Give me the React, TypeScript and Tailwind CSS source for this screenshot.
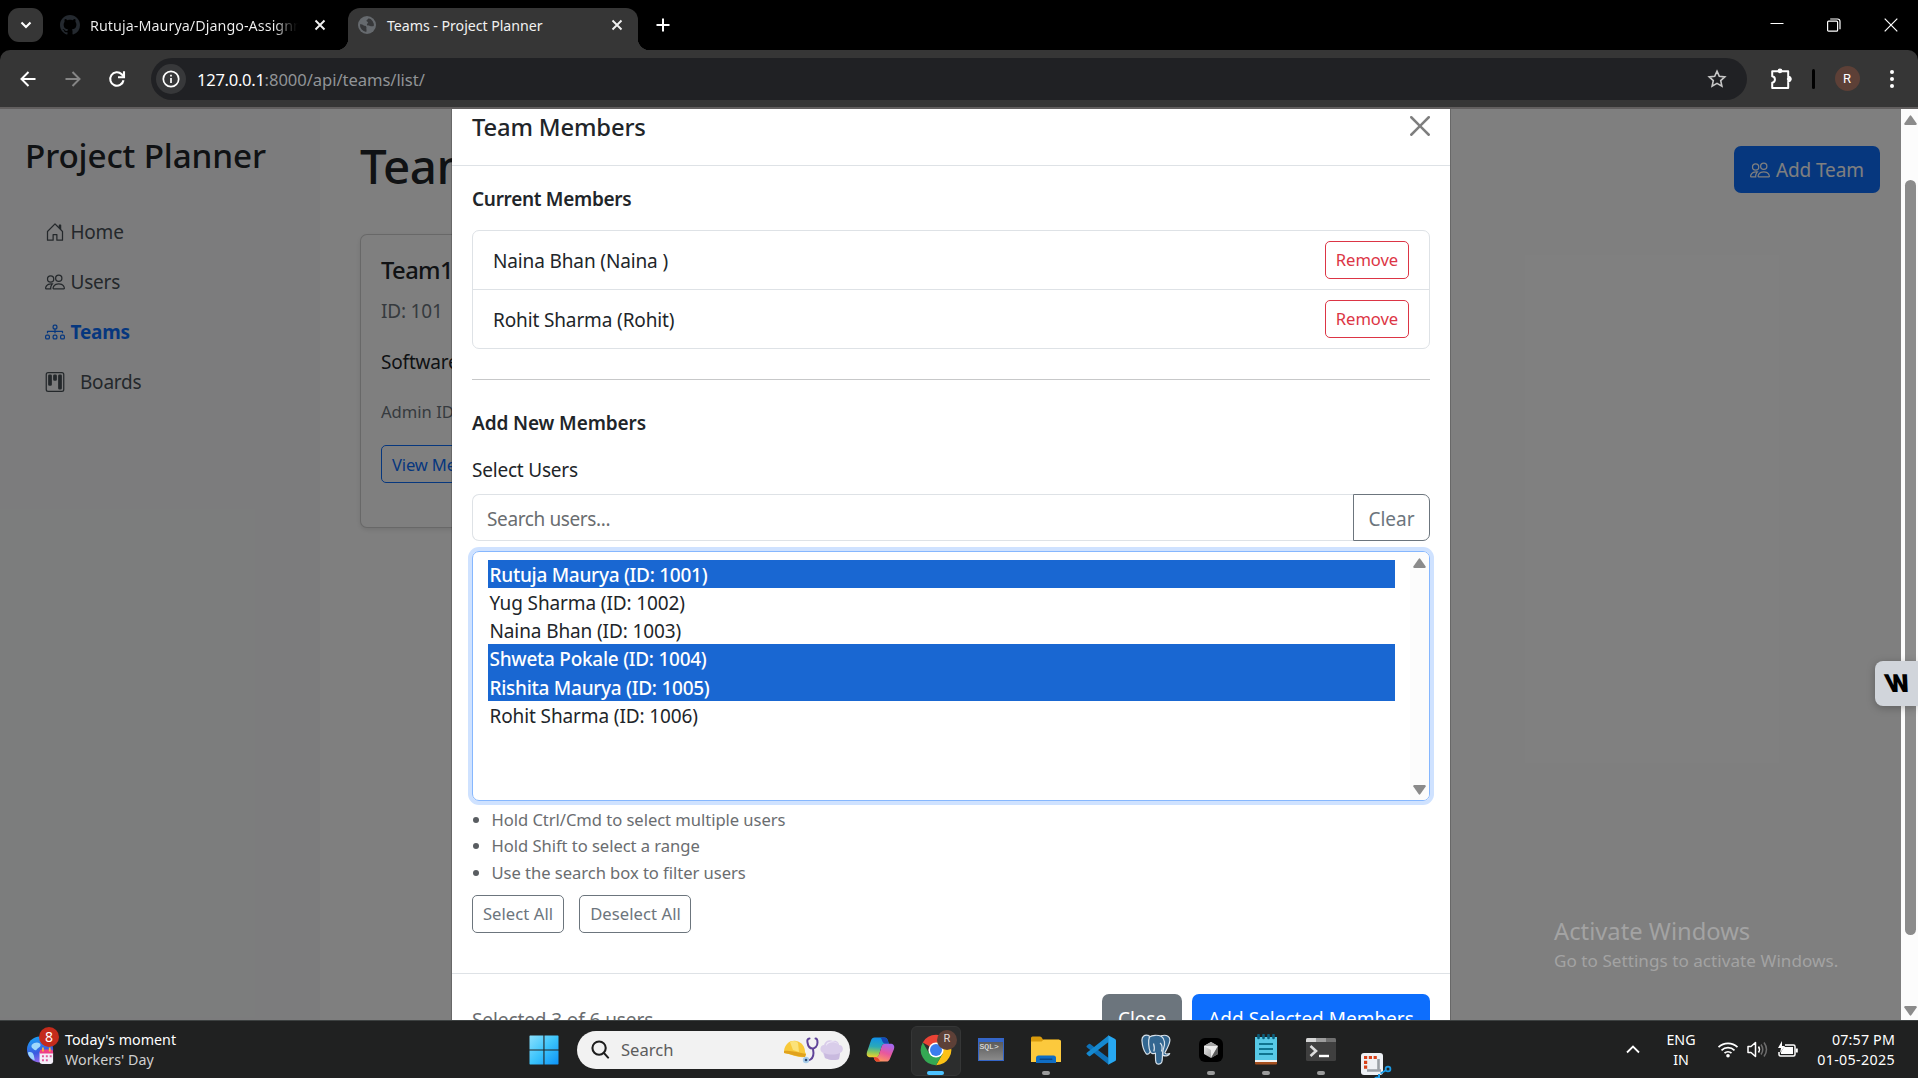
import type { ReactNode } from "react";
import { BsDiagram3, BsGithub, BsHouseDoor, BsKanban, BsPeople } from "react-icons/bs";

/* ---------- Browser chrome ---------- */

function TabClose() {
  return (
    <svg width="12" height="12" viewBox="0 0 12 12" stroke="#f1f1f1" strokeWidth="1.9" fill="none">
      <path d="M1.5 1.5l9 9M10.5 1.5l-9 9" />
    </svg>
  );
}

function GlobeFavicon() {
  return (
    <svg width="18" height="18" viewBox="0 0 18 18">
      <circle cx="9" cy="9" r="9" fill="#666a6e" />
      <path
        d="M2 8.2c1.500 0 2.600.3 3.400 1.100.700.700 2.400.400 2.900 1.400.500 1.200-.300 1.900.200 2.900.200.700 0 1.600-.300 2.400A7.100 7.100 0 0 1 2 8.200zM10.600 2.200c-.300 1.300-1.900 1.300-2.100 2.300-.200 1.100 1.500 1 1.500 2.100s-1.600 1.200-1 2.300c.700 1 2.200.200 3.100 1 .8.700 2.400.400 3.700.200a7.200 7.200 0 0 0-5.200-7.900z"
        fill="#37383a"
      />
    </svg>
  );
}

function TabStrip() {
  return (
    <div className="flex h-[50px] shrink-0 bg-black">
      <div className="mt-2 ml-2 flex h-[34px] w-[35px] items-center justify-center rounded-[11px] bg-[#363636]">
        <svg width="12" height="8" viewBox="0 0 12 8" fill="none" stroke="#fff" strokeWidth="2.1">
          <path d="M1.500 1.500L6 6l4.500-4.500" />
        </svg>
      </div>
      <div className="flex h-[50px] w-[305px] items-center pl-[17px]">
        <BsGithub className="size-5 shrink-0 text-[#24292f]" />
        <span className="ml-[10px] w-[210px] overflow-hidden whitespace-nowrap bg-linear-to-r from-[#f1f1f1] from-88% to-black to-100% bg-clip-text pt-[2px] text-[14.300px] leading-5 tracking-[0.004em] text-transparent">
          Rutuja-Maurya/Django-Assignment
        </span>
        <span className="ml-[14px]">
          <TabClose />
        </span>
      </div>
      <div className="relative mt-2 flex h-[42px] w-[290px] items-center rounded-t-[12px] bg-[#363636] pb-2 pl-[10px]">
        <div className="absolute bottom-0 -left-3 size-3 bg-[radial-gradient(circle_at_0_0,transparent_12px,#363636_12.500px)]" />
        <div className="absolute -right-3 bottom-0 size-3 bg-[radial-gradient(circle_at_100%_0,transparent_12px,#363636_12.500px)]" />
        <GlobeFavicon />
        <span className="ml-[11px] w-[160px] pt-[2px] text-[14.200px] leading-5 tracking-[-0.003em] whitespace-nowrap text-[#f1f1f1]">
          Teams - Project Planner
        </span>
        <span className="ml-[64px]">
          <TabClose />
        </span>
      </div>
      <div className="mt-[18px] ml-[18px]">
        <svg width="14" height="14" viewBox="0 0 14 14" stroke="#fff" strokeWidth="2">
          <path d="M7 0.500v13M0.500 7h13" />
        </svg>
      </div>
      <div className="mt-[18px] mr-5 ml-auto flex items-center gap-[43px] self-start">
        <svg width="14" height="14" viewBox="0 0 14 14" stroke="#fff">
          <path d="M0.500 5.500h13" />
        </svg>
        <svg width="14" height="14" viewBox="0 0 14 14" stroke="#fff" strokeWidth="1.200" fill="none">
          <rect x="0.600" y="3.200" width="10" height="10" rx="1" />
          <path d="M3.200 1h7.300q2.500 0 2.500 2.500v7.700" />
        </svg>
        <svg width="14" height="14" viewBox="0 0 14 14" stroke="#fff" strokeWidth="1.200">
          <path d="M0.700 0.700l12.600 12.600M13.300 0.700L0.700 13.300" />
        </svg>
      </div>
    </div>
  );
}

function Toolbar() {
  return (
    <div className="shrink-0 bg-black">
      <div className="flex h-[57px] items-center rounded-t-[10px] bg-[#363636] pl-5">
        <svg width="16" height="16" viewBox="0 0 16 16" fill="none" stroke="#fff" strokeWidth="2">
          <path d="M15.500 8H2M8.500 1L1.500 8l7 7" />
        </svg>
        <svg className="ml-[29px]" width="16" height="16" viewBox="0 0 16 16" fill="none" stroke="#858585" strokeWidth="2">
          <path d="M0.500 8H14M7.500 1l7 7-7 7" />
        </svg>
        <svg className="ml-[27px]" width="18" height="18" viewBox="0 0 18 18" fill="none" stroke="#fff" strokeWidth="2.100">
          <path d="M15.500 10.200A6.700 6.700 0 1 1 13.700 4.300L15.800 6.500" />
          <path d="M16 1.300v6h-6" />
        </svg>
        <div className="ml-[25px] flex h-[42px] w-[1596px] items-center rounded-full bg-[#202124] pl-[5px]">
          <div className="flex size-[30px] items-center justify-center rounded-full bg-[#37383a]">
            <svg width="18" height="18" viewBox="0 0 18 18" fill="none" stroke="#fff" strokeWidth="1.700">
              <circle cx="9" cy="9" r="7.700" />
              <path d="M9 8v5M9 4.700v1.900" />
            </svg>
          </div>
          <div className="ml-[11px] pt-[2px] text-[16.600px] leading-6 whitespace-nowrap">
            <span className="tracking-[-0.018em] text-white">127.0.0.1</span>
            <span className="tracking-[-0.004em] text-[#919497]">:8000/api/teams/list/</span>
          </div>
          <svg className="mr-5 ml-auto" width="20" height="19" viewBox="0 0 20 19" fill="none" stroke="#c7c7c7" strokeWidth="1.600">
            <path d="M10 2.200l2.300 5.100 5.500.6-4.100 3.700 1.200 5.500-4.900-2.800-4.900 2.800 1.200-5.500-4.100-3.700 5.500-.6z" />
          </svg>
        </div>
        <svg className="ml-[23px]" width="22" height="22" viewBox="0 0 22 22">
          <path
            d="M2.200 3.300h16v5.500a2.200 2.200 0 0 1 0 4.600v6.700h-16v-5.300a3.300 3.300 0 0 0 0-6.500z"
            fill="none"
            stroke="#fff"
            strokeWidth="2"
            strokeLinejoin="round"
          />
          <circle cx="10" cy="2.800" r="2.400" fill="#fff" />
          <circle cx="19.200" cy="11.100" r="2.400" fill="#fff" />
        </svg>
        <div className="ml-[20px] h-5 w-[2.500px] rounded-full bg-black" />
        <div className="ml-[20px] flex size-[25px] items-center justify-center rounded-full bg-[#5d4037] font-[Roboto] text-[13px] text-white">R</div>
        <div className="ml-[30px] flex flex-col items-center gap-[3px]">
          <i className="size-1 rounded-full bg-white" />
          <i className="size-1 rounded-full bg-white" />
          <i className="size-1 rounded-full bg-white" />
        </div>
      </div>
      <div className="h-[2px] bg-[#625f5f]" />
    </div>
  );
}

function ScrollArrow({ down = false }: { down?: boolean }) {
  return (
    <svg width="13" height="10" viewBox="0 0 13 10" className={down ? "rotate-180" : ""}>
      <path d="M5.600 0.900Q6.500-.2 7.400.9L12.700 8.400Q13 9.900 11.600 9.900H1.400Q0 9.900.3 8.400z" fill="#8b8b8b" />
    </svg>
  );
}

/* ---------- Page behind the modal ---------- */

function NavItem({ icon, label, active = false, wide = false }: { icon: ReactNode; label: string; active?: boolean; wide?: boolean }) {
  return (
    <div className={"flex h-[50px] items-center text-[19px] " + (active ? "font-bold text-[#0d6efd]" : "text-[#495057]")}>
      <span className="text-[20px]">{icon}</span>
      <span className={(wide ? "ml-[15px]" : "ml-[5.500px]") + " pt-px tracking-[-0.012em]"}>{label}</span>
    </div>
  );
}

function Page() {
  return (
    <div className="relative flex w-[1901px] bg-white text-[#212529]">
      <aside className="w-[320px] bg-[#f8f9fa] pt-[25px]">
        <h3 className="pl-[25px] text-[33.250px] leading-[42px] font-medium tracking-[-0.004em]">Project Planner</h3>
        <nav className="mt-[31px] pl-[45px]">
          <NavItem icon={<BsHouseDoor />} label="Home" />
          <NavItem icon={<BsPeople />} label="Users" />
          <NavItem icon={<BsDiagram3 />} label="Teams" active />
          <NavItem icon={<BsKanban />} label="Boards" wide />
        </nav>
      </aside>
      <main className="flex-1 pt-[26px] pr-[21px] pl-10">
        <div className="flex justify-between">
          <h1 className="text-[47.500px] leading-[61px] font-medium tracking-[-0.010em]">Teams</h1>
          <button className="mt-[11px] flex h-[47px] w-[146px] items-center rounded-[7px] bg-[#0d6efd] pl-4 text-white">
            <BsPeople className="size-5" />
            <span className="ml-[6px] pt-[2px] text-[19px] tracking-[-0.006em]">Add Team</span>
          </button>
        </div>
        <div className="mt-[38px] h-[294px] w-[370px] rounded-[7px] border border-black/18 bg-white px-5 pt-5 shadow-[0_2px_5px_rgba(0,0,0,0.1)]">
          <h5 className="text-[23.750px] leading-[30px] font-medium tracking-[-0.025em]">Team1</h5>
          <h6 className="mt-[14px] text-[19px] leading-6 tracking-[-0.010em] text-[#6c757d]">ID: 101</h6>
          <p className="mt-[24px] text-[19px] leading-[30px] tracking-[-0.010em]">Software Team</p>
          <p className="mt-[21px] text-[16.600px] leading-[27px] text-[#6c757d]">Admin ID: 1001</p>
          <button className="mt-[20px] h-[38px] rounded-[5px] border border-[#0d6efd] px-[10px] pt-[2px] text-[16.600px] tracking-[-0.010em] text-[#0d6efd]">
            View Members
          </button>
        </div>
      </main>
      <div className="absolute inset-0 bg-black/50" />
    </div>
  );
}

/* ---------- Modal ---------- */

const members = ["Naina Bhan (Naina )", "Rohit Sharma (Rohit)"];

const users = [
  { label: "Rutuja Maurya (ID: 1001)", selected: true },
  { label: "Yug Sharma (ID: 1002)", selected: false },
  { label: "Naina Bhan (ID: 1003)", selected: false },
  { label: "Shweta Pokale (ID: 1004)", selected: true },
  { label: "Rishita Maurya (ID: 1005)", selected: true },
  { label: "Rohit Sharma (ID: 1006)", selected: false },
];

const hints = ["Hold Ctrl/Cmd to select multiple users", "Hold Shift to select a range", "Use the search box to filter users"];

function Modal() {
  return (
    <div className="absolute -top-[21px] left-[452px] w-[998px] bg-white text-[19px] text-[#212529] shadow-[0_0_0_1px_rgba(0,0,0,0.18)]">
      <header className="flex h-[78px] items-center justify-between border-b border-[#dee2e6] px-5">
        <h5 className="text-[23.750px] leading-[38px] font-medium tracking-[-0.006em]">Team Members</h5>
        <svg width="20" height="20" viewBox="0 0 16 16" fill="#000" className="mb-[2px] opacity-50">
          <path d="M.293.293a1 1 0 0 1 1.414 0L8 6.586 14.293.293a1 1 0 1 1 1.414 1.414L9.414 8l6.293 6.293a1 1 0 0 1-1.414 1.414L8 9.414l-6.293 6.293a1 1 0 0 1-1.414-1.414L6.586 8 .293 1.707a1 1 0 0 1 0-1.414z" />
        </svg>
      </header>
      <div className="h-[807px] px-5 pt-[21px]">
        <h6 className="leading-6 font-semibold tracking-[-0.016em]">Current Members</h6>
        <ul className="mt-[19px] divide-y divide-[#dee2e6] rounded-[7px] border border-[#dee2e6]">
          {members.map((m) => (
            <li key={m} className="flex items-center justify-between px-5 py-[10px]">
              <span className="pt-[2px] tracking-[-0.007em]">{m}</span>
              <button className="h-[38px] w-[84px] rounded-[5px] border border-[#dc3545] pt-px text-[16.600px] tracking-[-0.004em] text-[#dc3545]">
                Remove
              </button>
            </li>
          ))}
        </ul>
        <hr className="mt-[30px] border-[#c7c8c9]" />
        <h6 className="mt-[31px] leading-6 font-semibold tracking-[-0.006em]">Add New Members</h6>
        <div className="mt-5 leading-[30px] tracking-[-0.011em]">Select Users</div>
        <div className="mt-[9px] flex h-[47px]">
          <div className="flex flex-1 items-center rounded-l-[7px] border border-r-0 border-[#dee2e6] pt-[3px] pl-[14px] tracking-[-0.020em] text-[#6a6d70]">
            Search users...
          </div>
          <button className="w-[77px] rounded-r-[7px] border border-[#6c757d] pt-[3px] text-[#6c757d]">Clear</button>
        </div>
        <div className="mt-[10px] flex h-[250px] justify-between rounded-[7px] border border-[#86b7fe] shadow-[0_0_0_4px_#cfe2ff]">
          <div className="w-[922px] pt-[8px] pl-[15px]">
            {users.map((u) => (
              <div
                key={u.label}
                className={
                  "h-[28.150px] pl-[1.500px] leading-[31px] " +
                  (u.selected ? "bg-[#1967d2] font-medium tracking-[-0.014em] text-white" : "tracking-[-0.006em]")
                }
              >
                {u.label}
              </div>
            ))}
          </div>
          <div className="flex w-[19px] flex-col items-center justify-between rounded-r-[6px] bg-[#fcfcfc] pt-[6px] pb-[5px]">
            <ScrollArrow />
            <ScrollArrow down />
          </div>
        </div>
        <ul className="mt-[6px] text-[16.600px] leading-[26.250px] tracking-[-0.003em] text-[#6a6d70]">
          {hints.map((h) => (
            <li key={h} className="flex items-center">
              <i className="mx-[1px] size-[6px] rounded-full bg-[#595d61]" />
              <span className="ml-[11.500px]">{h}</span>
            </li>
          ))}
        </ul>
        <div className="mt-[9px] flex gap-[15px] text-[16.600px] tracking-[0.004em] text-[#6c757d]">
          <button className="h-[38px] w-[92px] rounded-[5px] border border-[#6c757d] pt-[2px]">Select All</button>
          <button className="h-[38px] w-[112px] rounded-[5px] border border-[#6c757d] pt-[2px] pl-px">Deselect All</button>
        </div>
      </div>
      <footer className="flex h-[88px] items-start border-t border-[#dee2e6] px-5 pt-5">
        <span className="pt-[11px] leading-[30px] tracking-[-0.005em] text-[#6a6d70]">Selected 3 of 6 users</span>
        <button className="ml-auto h-[48px] w-[80px] rounded-[7px] bg-[#6c757d] pt-[2px] text-white">Close</button>
        <button className="ml-[10px] h-[48px] w-[238px] rounded-[7px] bg-[#0d6efd] pt-[2px] text-white">Add Selected Members</button>
      </footer>
    </div>
  );
}

/* ---------- Taskbar ---------- */

function Cell({ children, running = false }: { children: ReactNode; running?: boolean }) {
  return (
    <div className="relative flex h-[58px] w-[55px] shrink-0 items-center justify-center">
      {children}
      {running && <i className="absolute bottom-[4px] h-1 w-2 rounded-full bg-[#9b9b9b]" />}
    </div>
  );
}

function WindowsLogo() {
  return (
    <svg width="30" height="30" viewBox="0 0 30 30">
      <defs>
        <linearGradient id="win" x1="0" y1="0" x2="1" y2="1">
          <stop offset="0" stopColor="#8be0fd" />
          <stop offset=".5" stopColor="#3cc4fb" />
          <stop offset="1" stopColor="#0c92f8" />
        </linearGradient>
      </defs>
      <path d="M1 0.500h13.400v14H0.500V1zM15.500 0.500H29l.500.500v13.500H15.500zM0.500 15.600h13.900v14H1l-.5-.5zM15.500 15.600h14v13.500l-.5.5H15.500z" fill="url(#win)" />
    </svg>
  );
}

function SearchArt() {
  return (
    <svg width="62" height="28" viewBox="0 0 62 28">
      <path d="M1 15C2 7 8 4 13 5c6 1 9 6 9 11l1 2-1 3c-7 1-14-3-21-4z" fill="#f8c93a" />
      <path d="M7 6c3-2 7-1 8 1l1 9-6-2z" fill="#fbe27a" />
      <path d="M1 15c7-1 15 2 22 3l-1 3C15 21 8 18 1 17z" fill="#e0a21d" />
      <path d="M26.500 2.500c-2 0-2.500 2-2 4 .6 4 2.800 6 5 6s5-2 5-6c0-2-.5-4-2-4M30 13c1 5 0 9-2.500 10.500-2 1.200-3.500.8-5 .4" fill="none" stroke="#5f4398" strokeWidth="2" strokeLinecap="round" />
      <circle cx="23" cy="24" r="3.200" fill="#a9cdea" />
      <circle cx="23" cy="24" r="1.300" fill="#2b4a74" />
      <path d="M40 17c-4-2-3-8 1-8 1-4 5-6 9-4 4-1 6 2 6 4 5 0 5 7 1 8l-1 6c-4 2-10 1-14-1z" fill="#d9cdea" />
      <path d="M41 17c5 2 11 2 16 0l-1 6c-4 2-10 1-14-1z" fill="#c9badf" />
      <path d="M43 10c2-4 8-5 12-2-1-2-6-4-9-2-2 0-3 2-3 4z" fill="#efe8f8" />
    </svg>
  );
}

function Copilot() {
  return (
    <svg width="29" height="27" viewBox="0 0 30 28">
      <defs>
        <linearGradient id="cpA" x1="0.300" y1="0" x2="0.200" y2="1">
          <stop offset="0" stopColor="#1190ea" />
          <stop offset=".45" stopColor="#2aa9b8" />
          <stop offset=".75" stopColor="#8cc85a" />
          <stop offset="1" stopColor="#f5d02c" />
        </linearGradient>
        <linearGradient id="cpB" x1="0.700" y1="0" x2="0.300" y2="1">
          <stop offset="0" stopColor="#a368f0" />
          <stop offset=".5" stopColor="#e8579e" />
          <stop offset="1" stopColor="#ff9a5c" />
        </linearGradient>
      </defs>
      <path d="M9 1.500h10c2 0 3 1 3.700 3.500l1 3h-4c-2 0-3 1-3.600 3l-2.600 8.500c-.6 2-1.500 2.500-3.500 2.500H5c-3.500 0-5-2-4-5.500L5 5c.8-2.500 2-3.500 4-3.500z" fill="url(#cpA)" />
      <path d="M15 1.500h4c2 0 3 1 3.700 3.500l1 3H20c-3 0-3.500-5-5-6.500z" fill="#1748b5" />
      <path d="M21 26.500H12c-2 0-3-1-3.700-3.500L7.800 22H10c2 0 2.900-1 3.500-2.500L16.100 11c.6-2 1.600-3 3.600-3H25c3.500 0 5 2 4 5.500L25 23c-.8 2.500-2 3.500-4 3.500z" fill="url(#cpB)" />
      <path d="M15 26.500h-3c-2 0-3-1-3.700-3.500L7.800 22H10c3 0 3.500 3 5 4.500z" fill="#e8472c" />
    </svg>
  );
}

function Chrome() {
  return (
    <svg width="32" height="32" viewBox="-16 -16 32 32">
      <path d="M-13.200-7.600A15.200 15.200 0 0 1 13.200-7.600H0v7.600z" fill="#ea4335" />
      <path d="M13.200-7.600A15.200 15.200 0 0 1 0 15.200L6.600 3.800 0-7.600z" fill="#fbc116" />
      <path d="M0 15.200A15.200 15.200 0 0 1-13.200-7.600L-6.600 3.800H6.600z" fill="#34a853" />
      <circle r="7.600" fill="#fff" />
      <circle r="6" fill="#3b7ded" />
    </svg>
  );
}

function Folder() {
  return (
    <svg width="30" height="27" viewBox="0 0 30 27">
      <path d="M0 2Q0 .5 1.500.5h7.300q1 0 1.700.8l1.500 2.200H28v5H0z" fill="#d99b0c" />
      <path d="M0 5.500h10.500l2-1.700h16q1.500 0 1.500 1.500V26H0z" fill="#fcc93d" />
      <path d="M5 27v-5q0-2.500 2.500-2.500h15q2.500 0 2.500 2.500v5z" fill="#0f6dc4" />
      <rect x="8.500" y="22.500" width="13" height="1.400" rx=".7" fill="#0a4787" />
    </svg>
  );
}

function VsCode() {
  return (
    <svg width="30" height="30" viewBox="0 0 30 30">
      <path d="M.8 10.800l2-1.900q.7-.5 1.400 0l18.300 14v6.600L.8 12.300q-.8-.8 0-1.500z" fill="#0e72b9" />
      <path d="M.8 19.200l2 1.900q.7.500 1.400 0l18.300-14V.5L.8 17.700q-.8.800 0 1.500z" fill="#1589d0" />
      <path d="M22.200.3l6.500 3.400q1.300.6 1.300 1.900v18.800q0 1.300-1.300 1.900l-6.500 3.400z" fill="#27a8f2" />
    </svg>
  );
}

function Elephant() {
  return (
    <svg width="30" height="31" viewBox="0 0 30 31" stroke="#d8e2ea" strokeWidth="1.200" strokeLinejoin="round">
      <path d="M8 1.500C3 0 .6 3 1 7c.3 4 2 10 4 12.500 1.500 1.500 3 .5 4-1.500l2-2z" fill="#336791" />
      <path d="M20 1.800C26 0 29.500 3 28.800 7c-.5 4-3 8-4.600 11-.7 1.200.3 2 1.300 2 1.200 0 2.500 0 3.200-.4-.7 2-3.500 3-6.700 1.800z" fill="#336791" />
      <path d="M8.500 3C11 1 17 .6 20.500 2.500c3.500 2.500 3.600 8 2.300 11-.8 2.500-1.200 4-1.300 6.500-.1 3.500 0 6-.7 8-1 2.500-4.800 3-5.800.5-.8-2-.4-6-.6-9.500-1.500 1-4 1-5-1C7.500 14.500 7 6 8.500 3z" fill="#336791" />
      <path d="M12.500 9.500c.8 2.500 1.500 5 .3 8M19 9c2 1.500 2.500 5 1.500 8.500" fill="none" />
    </svg>
  );
}

function Terminal() {
  return (
    <svg width="30" height="23" viewBox="0 0 30 23">
      <rect width="30" height="23" rx="1.500" fill="#3f3f3f" />
      <path d="M0 1.500Q0 0 1.500 0H10v4H0z" fill="#d6d6d6" />
      <path d="M10 0h10v4H10z" fill="#9c9c9c" />
      <path d="M20 0h8.500Q30 0 30 1.500V4H20z" fill="#6f6f6f" />
      <path d="M4.500 8l5.500 5-5.500 5" fill="none" stroke="#dcdcdc" strokeWidth="2.600" />
      <path d="M13 18h10" stroke="#fff" strokeWidth="2.400" />
    </svg>
  );
}

function Notepad() {
  return (
    <svg width="22" height="31" viewBox="0 0 22 31">
      <path d="M0 3h22v24H0z" fill="#57c9e6" />
      <path d="M0 26h22v2H0z" fill="#f3f3f3" />
      <path d="M0 28h22v1.500q0 1-1 1H1q-1 0-1-1z" fill="#a5501f" />
      <path d="M3.500 1v3M8.500 1v3M13.500 1v3M18.500 1v3" stroke="#0c5f7d" strokeWidth="2.600" strokeLinecap="round" />
      <path d="M4 10h14M4 15h14M4 20h14" stroke="#0f7590" strokeWidth="2" />
    </svg>
  );
}

function CursorApp() {
  return (
    <svg width="24" height="24" viewBox="0 0 24 24">
      <defs>
        <linearGradient id="cube" x1="0" y1="0" x2="1" y2="1">
          <stop offset="0" stopColor="#efefef" />
          <stop offset="1" stopColor="#8c8c8c" />
        </linearGradient>
      </defs>
      <rect width="24" height="24" rx="6" fill="#000" />
      <path d="M12 4l7 4v8l-7 4-7-4V8z" fill="url(#cube)" />
      <path d="M12 4l7 4-7 .500L5 8z" fill="#a3a3a3" />
      <path d="M19 8l-7 12v-8L5 8z" fill="#f7f7f7" opacity=".8" />
      <path d="M19 8v8l-7 4z" fill="#5b5b5b" />
    </svg>
  );
}

function SnippingTool() {
  return (
    <svg width="32" height="26" viewBox="0 0 32 26">
      <rect width="22" height="22" rx="3" fill="#eef1f5" />
      <path d="M3 4.500h3.200m1.600 0H11m1.600 0h3.200M3 9.300h3.200M3 14.100h3.200" fill="none" stroke="#d8421b" strokeWidth="3.200" />
      <path d="M6 17.500h14M17.500 6v12" stroke="#9aa0a6" strokeWidth="2.600" />
      <circle cx="27" cy="16" r="2.400" fill="none" stroke="#1c9be6" strokeWidth="1.800" />
      <path d="M24.500 17.500l-5 3M18 21v4" stroke="#1c9be6" strokeWidth="2" />
      <circle cx="16" cy="26.500" r="2.200" fill="none" stroke="#1c9be6" strokeWidth="1.800" />
    </svg>
  );
}

function NewsWidget() {
  return (
    <svg width="29" height="29" viewBox="0 0 30 30">
      <defs>
        <linearGradient id="earth" x1="0.300" y1="0" x2="0.600" y2="1">
          <stop offset="0" stopColor="#1aa0f5" />
          <stop offset=".6" stopColor="#3a5be0" />
          <stop offset="1" stopColor="#a66bf0" />
        </linearGradient>
      </defs>
      <circle cx="13.500" cy="14" r="13.500" fill="url(#earth)" />
      <path d="M5 9c3-3 8-3 9 0 0 3-3 3-4 5s-3 0-4-1-2-2-1-4zM1 17c3-1 5 0 6 3l1 5C4 24 1 20 1 17z" fill="#9fd8fb" />
      <rect x="13" y="15" width="14" height="14" rx="2.500" fill="#f3eef8" />
      <path d="M13 18v-1.500Q13 14 15.500 14h9q2.500 0 2.500 2.500V18z" fill="#ef3d86" />
      <path d="M16.500 12v4M23.500 12v4" stroke="#f7b93e" strokeWidth="1.800" />
      <path d="M15.500 21h2m2 0h2m2 0h2m-10 4h2m2 0h2" stroke="#e2579b" strokeWidth="2" />
    </svg>
  );
}

function Taskbar() {
  return (
    <div className="flex h-[58px] shrink-0 items-center border-t border-[#3d4141] bg-[#202121]">
      <div className="flex w-[516px] items-center pl-[27px]">
        <div className="relative pt-[1px]">
          <NewsWidget />
          <span className="absolute -top-[8px] left-[12px] flex size-[20px] items-center justify-center rounded-full bg-[#c42b1c] text-[14px] text-white">
            8
          </span>
        </div>
        <div className="ml-[9px] text-[14.250px] leading-5 tracking-[0.002em]">
          <div className="text-white">Today's moment</div>
          <div className="text-[#cfcfcf]">Workers' Day</div>
        </div>
      </div>
      <Cell>
        <WindowsLogo />
      </Cell>
      <div className="ml-[6px] flex h-[38px] w-[273px] shrink-0 items-center rounded-full bg-[#f2f2f2] pl-[14px]">
        <svg width="19" height="19" viewBox="0 0 20 20" fill="none" stroke="#1d1d1d" strokeWidth="2.200">
          <circle cx="8.500" cy="8.500" r="7" />
          <path d="M13.500 13.500l4.500 5" strokeLinecap="round" />
        </svg>
        <span className="ml-[11px] pt-[2px] text-[16.600px] text-[#5c5c5c]">Search</span>
        <span className="mr-[5px] ml-auto pt-px">
          <SearchArt />
        </span>
      </div>
      <div className="ml-[3px] flex">
        <Cell>
          <Copilot />
        </Cell>
        <Cell>
          <div className="absolute inset-x-[2.500px] top-[5px] bottom-[3px] rounded-[6px] border border-[#353636] bg-[#2c2d2d]" />
          <div className="relative">
            <Chrome />
          </div>
          <span className="absolute top-[9px] right-[6px] flex size-5 items-center justify-center rounded-full bg-[#5d4037] font-[Roboto] text-[11px] text-[#e4dad6]">
            R
          </span>
          <i className="absolute bottom-[4px] h-1 w-[17px] rounded-full bg-[#4cc2ff]" />
        </Cell>
        <Cell>
          <div className="h-[23px] w-[26px] border border-t-[4px] border-[#3566c8] bg-linear-to-b from-[#5b5b5b] to-[#8a8a8a] pl-[1px] font-['Liberation_Mono'] text-[8px] leading-[9px] text-[#eee]">
            SQL&gt;
          </div>
        </Cell>
        <Cell running>
          <Folder />
        </Cell>
        <Cell>
          <VsCode />
        </Cell>
        <Cell>
          <Elephant />
        </Cell>
        <Cell running>
          <CursorApp />
        </Cell>
        <Cell running>
          <Notepad />
        </Cell>
        <Cell running>
          <Terminal />
        </Cell>
        <div className="flex h-[58px] w-[55px] items-end overflow-hidden pl-[13px]">
          <SnippingTool />
        </div>
      </div>
      <div className="mr-[23px] ml-auto flex items-center text-[14.250px] leading-5 text-white">
        <svg width="14" height="9" viewBox="0 0 14 9" fill="none" stroke="#fff" strokeWidth="1.800">
          <path d="M1 7.500l6-6 6 6" />
        </svg>
        <div className="ml-[26px] w-[30px] text-center">
          <div>ENG</div>
          <div>IN</div>
        </div>
        <svg className="ml-[21px]" width="22" height="17" viewBox="0 0 22 17" fill="none" stroke="#fff" strokeWidth="1.700">
          <path d="M1.500 6.200a13.500 13.500 0 0 1 19 0M4.500 9.300a9.300 9.300 0 0 1 13 0M7.500 12.200a5 5 0 0 1 7 0" />
          <circle cx="11" cy="14.700" r="1.800" fill="#fff" stroke="none" />
        </svg>
        <svg className="ml-[8px]" width="21" height="17" viewBox="0 0 21 17" fill="none" stroke="#fff" strokeWidth="1.500">
          <path d="M1 5.500h3l4.500-4v14L4 11.500H1z" strokeLinejoin="round" />
          <path d="M11.500 5.500q2 3 0 6" />
          <path d="M14 3.500q3.500 5 0 10M17 1.500q5 7 0 14" stroke="#6d6d6d" />
        </svg>
        <svg className="ml-[9px]" width="21" height="17" viewBox="0 0 21 17" fill="none" stroke="#fff" strokeWidth="1.500">
          <path d="M8 4h8.500q1.500 0 1.500 1.500v8q0 1.500-1.500 1.500h-13Q2 15 2 13.500V11" />
          <path d="M19.800 7.500v4" strokeWidth="2" />
          <path d="M7 6h9v7H4v-2z" fill="#fff" stroke="none" />
          <path d="M5 0L1 7h3l-1 5 5-7H5z" fill="#fff" stroke="none" />
        </svg>
        <div className="ml-[16px] w-[81px] text-right tracking-[0.024em] whitespace-nowrap">
          <div className="tracking-[0.012em]">07:57 PM</div>
          <div>01-05-2025</div>
        </div>
      </div>
    </div>
  );
}

export default function App() {
  return (
    <div className="flex h-[1078px] w-[1918px] flex-col overflow-hidden font-['Noto_Sans',sans-serif]">
      <TabStrip />
      <Toolbar />
      <div className="relative flex min-h-0 flex-1 overflow-hidden">
        <Page />
        <div className="flex w-[17px] flex-col items-center bg-[#fcfcfc] pt-[6px] pb-[4px] pl-[2px]">
          <ScrollArrow />
          <div className="mt-[55px] h-[755px] w-[11px] rounded-full bg-[#8b8b8b]" />
          <div className="mt-auto">
            <ScrollArrow down />
          </div>
        </div>
        <Modal />
        <div className="absolute top-[805px] left-[1554px] text-[#a3a3a3]">
          <div className="text-[23.750px] leading-[34px]">Activate Windows</div>
          <div className="text-[17.100px] leading-[25px] tracking-[0.002em]">Go to Settings to activate Windows.</div>
        </div>
        <div className="absolute top-[552px] right-0 flex h-[45px] w-[43px] items-center justify-center rounded-l-[8px] bg-[#d1d5db] pl-[2px] shadow-[0_2px_8px_rgba(0,0,0,0.25)]">
          <span className="scale-x-110 skew-x-[14deg] font-[Roboto] text-[25px] leading-none font-black text-black">W</span>
        </div>
      </div>
      <Taskbar />
    </div>
  );
}
